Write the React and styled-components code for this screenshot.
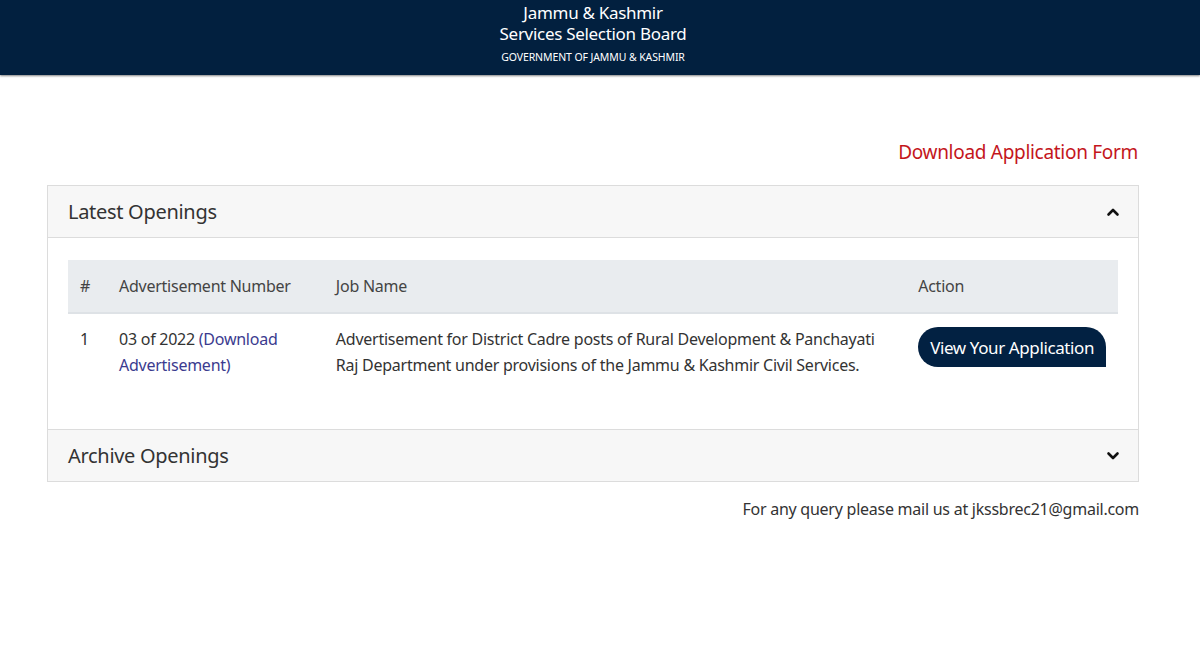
import React from 'react';
import styled, {createGlobalStyle} from "styled-components";

const GlobalStyle = createGlobalStyle`
    html, body {
        margin: 0;
        padding: 0;
        background: #fff;
    }
    body {
        font-family: "Noto Sans", "Open Sans", "DejaVu Sans", sans-serif;
        color: #333;
    }
`;

const Header = styled.header`
    height: 75px;
    background-color: #02203f;
    box-shadow: 0 1px 2px rgba(0,0,0,0.5);
    display: flex;
    flex-flow: column nowrap;
    align-items: center;
    color: #fff;
    padding: 2px 14px 0 0;
    box-sizing: border-box;
`;

const BoardName = styled.div`
    font-size: 17px;
    line-height: 21px;
    text-align: center;
    letter-spacing: -0.3px;
`;

const Gov = styled.div`
    font-size: 10.5px;
    margin-top: 6px;
    letter-spacing: -0.1px;
`;

const Main = styled.main`
    width: 1092px;
    margin: 0 0 0 47px;
    padding-top: 64px;
    display: flex;
    flex-flow: column nowrap;
`;

const FormLink = styled.a`
    align-self: flex-end;
    color: #c4161c;
    font-size: 19px;
    line-height: 26px;
    text-decoration: none;
    margin-bottom: 20px;
    margin-right: 1px;
    letter-spacing: -0.3px;
`;

const Accordion = styled.div`
    border: 1px solid #dcdcdc;
`;

const PanelHead = styled.div`
    height: 51px;
    padding: 0 18px 0 20px;
    background-color: #f7f7f7;
    display: flex;
    align-items: center;
    justify-content: space-between;
    font-size: 20px;
    color: #333;
    letter-spacing: -0.3px;
    border-top: ${p => p.$first ? "none" : "1px solid #dcdcdc"};
    border-bottom: ${p => p.$open ? "1px solid #dcdcdc" : "none"};
`;

const PanelBody = styled.div`
    padding: 22px 20px 51px;
`;

const Table = styled.table`
    width: 100%;
    border-collapse: collapse;
    font-size: 16px;
    letter-spacing: -0.25px;
    color: #333;
`;

const Th = styled.th`
    background-color: #e9ecef;
    height: 52px;
    text-align: left;
    font-weight: 400;
    padding: 0 12px;
    width: ${p => p.$w || "auto"};
    border-bottom: 2px solid #dee2e6;
    color: #444;
`;

const Td = styled.td`
    padding: 12px 12px 0;
    vertical-align: top;
    line-height: 26px;
`;

const AdLink = styled.a`
    color: #3b3b8f;
    text-decoration: none;
`;

const ViewButton = styled.button`
    margin-top: 1px;
    background-color: #022142;
    color: #fff;
    border: none;
    border-radius: 20px 20px 0 20px;
    height: 40px;
    padding: 0 12px;
    font-family: inherit;
    font-size: 17px;
    letter-spacing: -0.4px;
    white-space: nowrap;
    cursor: pointer;
`;

const Footer = styled.div`
    align-self: flex-end;
    margin-top: 16px;
    font-size: 16px;
    letter-spacing: -0.25px;
    color: #333;
`;

function Chevron({up}){
    return <svg width="14" height="14" viewBox="0 0 14 14">
        <path d={up ? "M2.5 9.5 L7 5 L11.5 9.5" : "M2.5 4.5 L7 9 L11.5 4.5"}
            fill="none" stroke="#111" strokeWidth="2.6" strokeLinecap="round" strokeLinejoin="round" />
    </svg>
}

export default function App(){
    return <>
        <GlobalStyle />
        <Header>
            <BoardName>Jammu &amp; Kashmir<br/>Services Selection Board</BoardName>
            <Gov>GOVERNMENT OF JAMMU &amp; KASHMIR</Gov>
        </Header>
        <Main>
            <FormLink href="#">Download Application Form</FormLink>
            <Accordion>
                <PanelHead $first $open>
                    <span>Latest Openings</span>
                    <Chevron up />
                </PanelHead>
                <PanelBody>
                    <Table>
                        <thead>
                            <tr>
                                <Th $w="15px">#</Th>
                                <Th $w="193px">Advertisement Number</Th>
                                <Th $w="559px">Job Name</Th>
                                <Th>Action</Th>
                            </tr>
                        </thead>
                        <tbody>
                            <tr>
                                <Td>1</Td>
                                <Td>03 of 2022 <AdLink href="#">(Download Advertisement)</AdLink></Td>
                                <Td>Advertisement for District Cadre posts of Rural Development &amp; Panchayati Raj Department under provisions of the Jammu &amp; Kashmir Civil Services.</Td>
                                <Td><ViewButton>View Your Application</ViewButton></Td>
                            </tr>
                        </tbody>
                    </Table>
                </PanelBody>
                <PanelHead>
                    <span>Archive Openings</span>
                    <Chevron />
                </PanelHead>
            </Accordion>
            <Footer>For any query please mail us at jkssbrec21@gmail.com</Footer>
        </Main>
    </>
}
